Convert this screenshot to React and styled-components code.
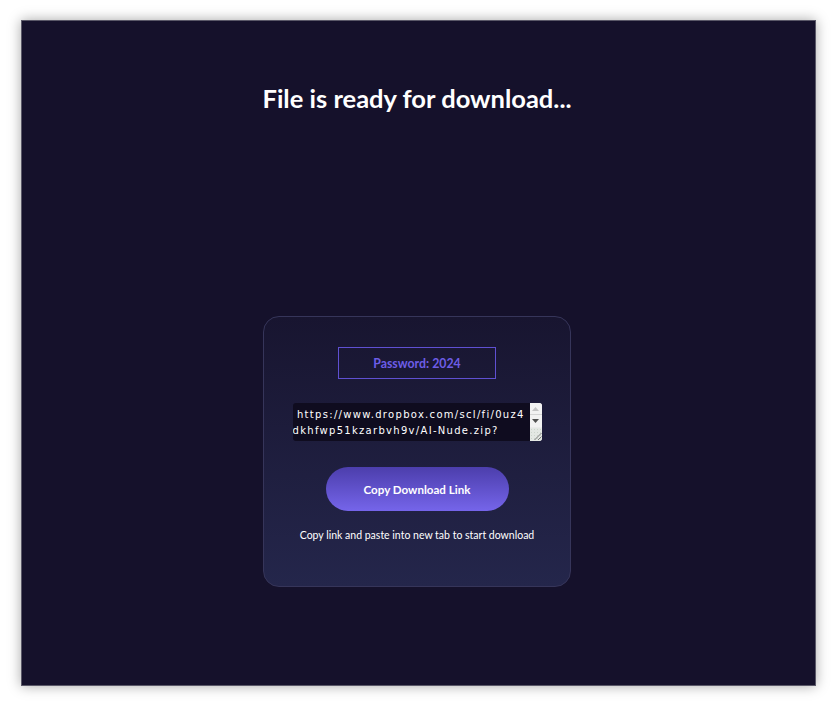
import React from "react";
import styled, { createGlobalStyle } from "styled-components";

const GlobalStyle = createGlobalStyle`
  html, body {
    margin: 0;
    padding: 0;
    background: #ffffff;
  }
  * {
    box-sizing: border-box;
  }
`;

const Page = styled.div`
  padding: 20px 21px;
`;

const Frame = styled.div`
  width: 795px;
  height: 666px;
  padding-right: 3px;
  background: #15112b;
  border: 1px solid #5a5868;
  box-shadow: 0 0 12px rgba(0, 0, 0, 0.35);
  display: flex;
  flex-direction: column;
  align-items: center;
  font-family: "Lato", "Open Sans", sans-serif;
  color: #ffffff;
`;

const Title = styled.h1`
  margin: 62px 0 0;
  font-size: 25.5px;
  line-height: 31px;
  font-weight: 700;
  color: #ffffff;
`;

const Card = styled.div`
  margin-top: 202px;
  width: 308px;
  height: 271px;
  border: 1px solid #36355a;
  border-radius: 16px;
  background: linear-gradient(180deg, #181530 0%, #24264b 100%);
  display: flex;
  flex-direction: column;
  align-items: center;
  padding-top: 30px;
`;

const PasswordBox = styled.div`
  width: 158px;
  height: 32px;
  border: 1px solid #5f50d2;
  display: flex;
  align-items: center;
  justify-content: center;
  font-size: 12.3px;
  font-weight: 700;
  color: #6d5de6;
`;

const LinkField = styled.div`
  margin-top: 24px;
  width: 249px;
  height: 38px;
  display: flex;
  border-radius: 3px;
  overflow: hidden;
  background: #0f0c1f;
`;

const LinkArea = styled.textarea`
  flex: 1;
  height: 100%;
  padding: 4px 0 0;
  border: none;
  background: transparent;
  color: #ffffff;
  font-family: "DejaVu Sans", "Liberation Sans", sans-serif;
  font-size: 10px;
  line-height: 16px;
  letter-spacing: 1.3px;
  word-break: break-all;
  overflow: hidden;
  resize: none;
  outline: none;
`;

const ScrollColumn = styled.div`
  width: 12px;
  display: flex;
  flex-direction: column;
  background: #ebebeb;
`;

const ScrollButton = styled.div`
  height: 12px;
  display: flex;
  align-items: center;
  justify-content: center;
  background: #f2f2f2;
  border-bottom: 1px solid ${(p) => (p.$divider ? "#d4d4d4" : "transparent")};
`;

const Grip = styled.div`
  margin-top: auto;
  height: 13px;
  display: flex;
  align-items: flex-end;
  justify-content: flex-end;
  background: radial-gradient(circle, #cdd5cd 40%, transparent 45%) 0 0 / 3px 3px,
    #e4e8e4;
`;

const Arrow = ({ down, color }) => (
  <svg width="7" height="4" viewBox="0 0 7 4">
    <polygon points={down ? "0,0 7,0 3.5,4" : "0,4 7,4 3.5,0"} fill={color} />
  </svg>
);

const CopyButton = styled.button`
  margin-top: 26px;
  width: 183px;
  height: 44px;
  border: none;
  border-radius: 22px;
  background: linear-gradient(180deg, #4c3eac 0%, #7565ea 100%);
  color: #ffffff;
  font-family: inherit;
  font-size: 11.6px;
  font-weight: 700;
  cursor: pointer;
`;

const Hint = styled.p`
  margin: 17px 0 0;
  font-size: 10.5px;
  line-height: 15px;
  color: #ffffff;
`;

const link = " https://www.dropbox.com/scl/fi/0uz4dkhfwp51kzarbvh9v/AI-Nude.zip?";

export default function App() {
  return (
    <Page>
      <GlobalStyle />
      <Frame>
        <Title>File is ready for download...</Title>
        <Card>
          <PasswordBox>Password: 2024</PasswordBox>
          <LinkField>
            <LinkArea readOnly defaultValue={link} />
            <ScrollColumn>
              <ScrollButton $divider>
                <Arrow color="#c4c4c4" />
              </ScrollButton>
              <ScrollButton>
                <Arrow down color="#505050" />
              </ScrollButton>
              <Grip>
                <svg width="12" height="13" viewBox="0 0 12 13">
                  <line x1="11.5" y1="5" x2="4.5" y2="12" stroke="#7a7a7a" strokeWidth="1" />
                  <line x1="11.5" y1="8.5" x2="8" y2="12" stroke="#7a7a7a" strokeWidth="1" />
                </svg>
              </Grip>
            </ScrollColumn>
          </LinkField>
          <CopyButton>Copy Download Link</CopyButton>
          <Hint>Copy link and paste into new tab to start download</Hint>
        </Card>
      </Frame>
    </Page>
  );
}
